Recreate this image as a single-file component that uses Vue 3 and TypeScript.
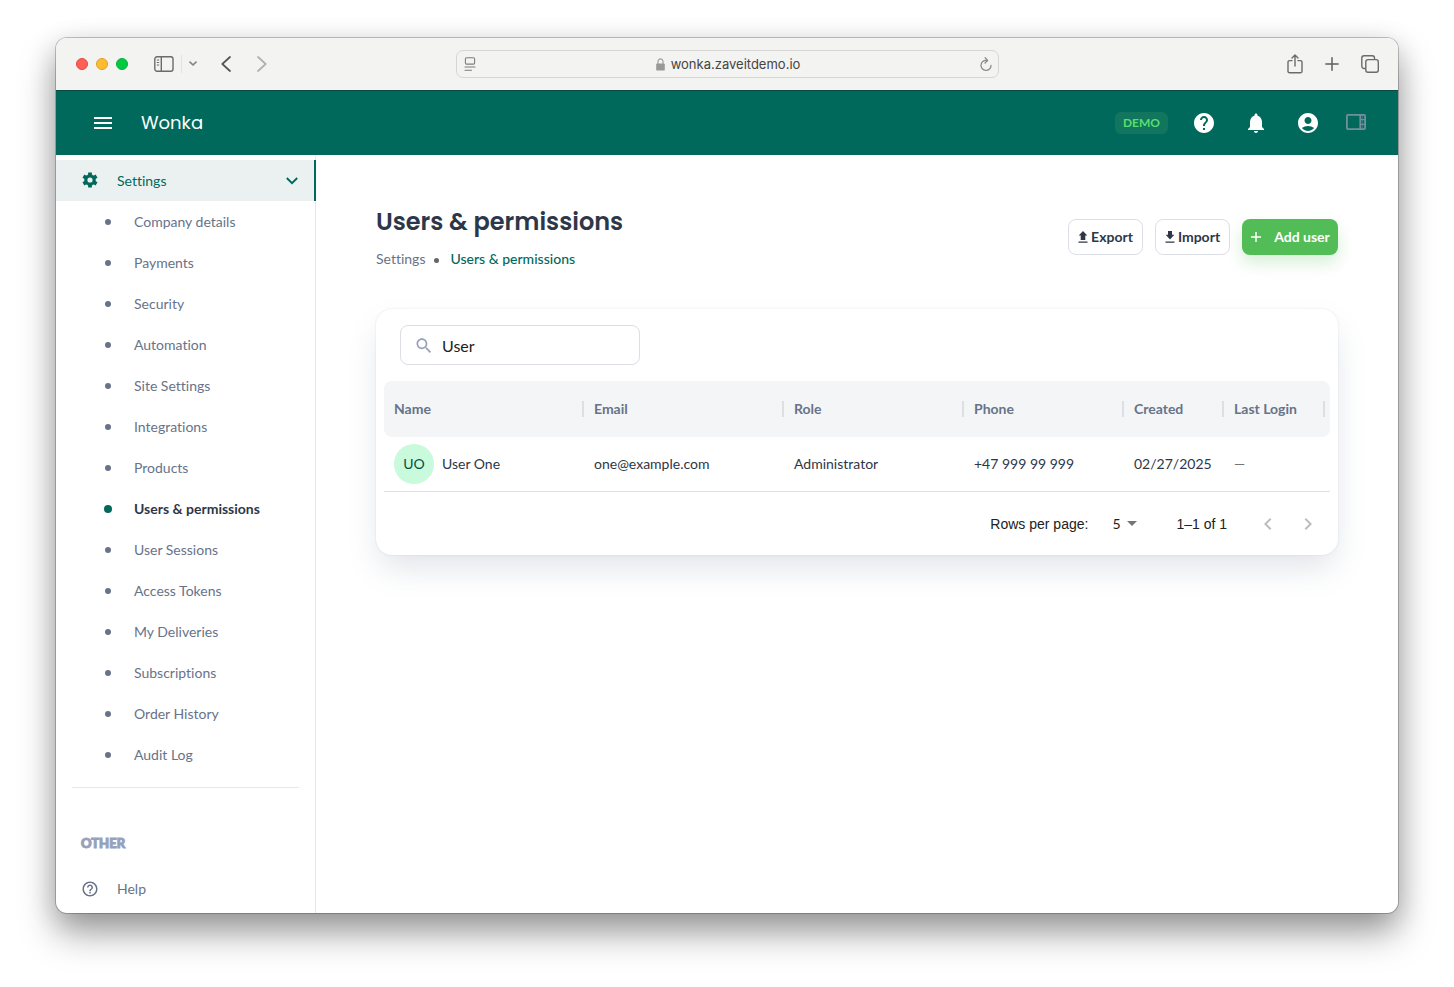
<script setup lang="ts">
import { ref } from 'vue'

interface Column {
  key: string
  label: string
}

interface UserRow {
  initials: string
  name: string
  email: string
  role: string
  phone: string
  created: string
  lastLogin: string
}

const navItems: string[] = [
  'Company details',
  'Payments',
  'Security',
  'Automation',
  'Site Settings',
  'Integrations',
  'Products',
  'Users & permissions',
  'User Sessions',
  'Access Tokens',
  'My Deliveries',
  'Subscriptions',
  'Order History',
  'Audit Log',
]
const activeItem = ref('Users & permissions')

const columns: Column[] = [
  { key: 'name', label: 'Name' },
  { key: 'email', label: 'Email' },
  { key: 'role', label: 'Role' },
  { key: 'phone', label: 'Phone' },
  { key: 'created', label: 'Created' },
  { key: 'last', label: 'Last Login' },
]

const users: UserRow[] = [
  {
    initials: 'UO',
    name: 'User One',
    email: 'one@example.com',
    role: 'Administrator',
    phone: '+47 999 99 999',
    created: '02/27/2025',
    lastLogin: '—',
  },
]

const query = ref('User')
const rowsPerPage = ref('5')
</script>

<template>
  <div class="desktop">
    <div class="window">
      <div class="toolbar">
        <div class="toolbar-left">
          <div class="lights">
            <span class="light red"></span>
            <span class="light yellow"></span>
            <span class="light green"></span>
          </div>
          <button class="tool sidebar-toggle" type="button" aria-label="Toggle sidebar">
            <svg width="20" height="16" viewBox="0 0 20 16" fill="none" stroke="#6b6b6a" stroke-width="1.4">
              <rect x="0.8" y="0.8" width="18.2" height="14.4" rx="2.2" />
              <path d="M7.3 1v14" />
              <path d="M2.8 4h2.4M2.8 6.5h2.4M2.8 9h2.4" stroke-width="1" />
            </svg>
          </button>
          <span class="tool-divider"></span>
          <button class="tool tab-groups" type="button" aria-label="Tab groups">
            <svg width="8" height="6" viewBox="0 0 8 6" fill="none" stroke="#858584" stroke-width="1.7" stroke-linecap="round" stroke-linejoin="round">
              <path d="M1 1.2l3 2.8 3-2.8" />
            </svg>
          </button>
          <button class="tool back" type="button" aria-label="Back">
            <svg width="10" height="16" viewBox="0 0 10 16" fill="none" stroke="#555554" stroke-width="1.7" stroke-linecap="round" stroke-linejoin="round">
              <path d="M9 1L1.3 8 9 15" />
            </svg>
          </button>
          <button class="tool forward" type="button" aria-label="Forward">
            <svg width="10" height="16" viewBox="0 0 10 16" fill="none" stroke="#b0b0af" stroke-width="1.7" stroke-linecap="round" stroke-linejoin="round">
              <path d="M1 1l7.7 7L1 15" />
            </svg>
          </button>
        </div>
        <div class="address">
          <svg width="12" height="14" viewBox="0 0 12 14" fill="none" stroke="#7d7d7c" stroke-width="1.1" stroke-linecap="round">
            <rect x="1.4" y="0.7" width="9.2" height="6.4" rx="1.2" />
            <path d="M1 10h10M1 13.2h6.5" />
          </svg>
          <span class="host">
            <svg width="9" height="13" viewBox="0 0 9 13">
              <path d="M2 6V3.4a2.5 2.6 0 0 1 5 0V6" fill="none" stroke="#a2a2a1" stroke-width="1.2" />
              <rect x="0.2" y="5.4" width="8.6" height="7.2" rx="1.2" fill="#999998" />
            </svg>
            wonka.zaveitdemo.io
          </span>
          <button class="tool" type="button" aria-label="Reload">
            <svg width="12" height="15" viewBox="0 0 12 15" fill="none" stroke="#8b8b8a" stroke-width="1.3" stroke-linecap="round" stroke-linejoin="round">
              <path d="M6.500 3.400A5 5 0 1 0 11 8.400" />
              <path d="M5.200 0.800L7.600 3.500 5 6" />
            </svg>
          </button>
        </div>
        <div class="toolbar-right">
          <button class="tool" type="button" aria-label="Share">
            <svg width="16" height="20" viewBox="0 0 16 20" fill="none" stroke="#6b6b6a" stroke-width="1.4" stroke-linecap="round" stroke-linejoin="round">
              <path d="M5 6.600H2.600A1.600 1.600 0 0 0 1 8.200v9A1.600 1.600 0 0 0 2.600 18.800h10.800a1.600 1.600 0 0 0 1.600-1.600v-9a1.600 1.600 0 0 0-1.600-1.600H11" />
              <path d="M8 12V1.200M5 4l3-3 3 3" />
            </svg>
          </button>
          <button class="tool" type="button" aria-label="New tab">
            <svg width="14" height="14" viewBox="0 0 14 14" fill="none" stroke="#5f5f5e" stroke-width="1.500" stroke-linecap="round">
              <path d="M7 0.800v12.400M0.800 7h12.400" />
            </svg>
          </button>
          <button class="tool" type="button" aria-label="Tab overview">
            <svg width="18" height="18" viewBox="0 0 18 18" fill="none" stroke="#6b6b6a" stroke-width="1.400">
              <path d="M4.800 13.500H3A2.200 2.200 0 0 1 0.800 11.300V3A2.200 2.200 0 0 1 3 0.800h8.300A2.200 2.200 0 0 1 13.500 3v1.500" />
              <rect x="4.800" y="4.600" width="12.500" height="12.600" rx="2.200" />
            </svg>
          </button>
        </div>
      </div>

      <header class="app-bar">
        <button class="bar-btn menu" type="button" aria-label="Menu">
          <svg width="24" height="24" viewBox="0 0 24 24" fill="currentColor">
            <path d="M3 18h18v-2H3v2zm0-5h18v-2H3v2zm0-7v2h18V6H3z" />
          </svg>
        </button>
        <span class="brand">Wonka</span>
        <div class="bar-actions">
          <span class="demo">DEMO</span>
          <button class="bar-btn" type="button" aria-label="Help">
            <svg width="24" height="24" viewBox="0 0 24 24" fill="currentColor">
              <path d="M12 2C6.480 2 2 6.480 2 12s4.480 10 10 10 10-4.480 10-10S17.520 2 12 2zm1 17h-2v-2h2v2zm2.070-7.750l-.9.920C13.450 12.900 13 13.500 13 15h-2v-.5c0-1.100.450-2.100 1.170-2.830l1.240-1.260c.370-.360.590-.860.590-1.410 0-1.100-.9-2-2-2s-2 .9-2 2H8c0-2.210 1.790-4 4-4s4 1.790 4 4c0 .880-.360 1.680-.930 2.250z" />
            </svg>
          </button>
          <button class="bar-btn" type="button" aria-label="Notifications">
            <svg width="24" height="24" viewBox="0 0 24 24" fill="currentColor">
              <path d="M12 22c1.100 0 2-.9 2-2h-4c0 1.100.890 2 2 2zm6-6v-5c0-3.070-1.640-5.640-4.500-6.320V4c0-.830-.670-1.500-1.500-1.500s-1.500.670-1.500 1.500v.680C7.630 5.360 6 7.920 6 11v5l-2 2v1h16v-1l-2-2z" />
            </svg>
          </button>
          <button class="bar-btn" type="button" aria-label="Account">
            <svg width="24" height="24" viewBox="0 0 24 24" fill="currentColor">
              <path d="M12 2C6.480 2 2 6.480 2 12s4.480 10 10 10 10-4.480 10-10S17.520 2 12 2zm0 4c1.930 0 3.500 1.570 3.500 3.500S13.930 13 12 13s-3.500-1.570-3.500-3.500S10.070 6 12 6zm0 14c-2.030 0-4.430-.820-6.140-2.880C7.550 15.800 9.680 15 12 15s4.450.8 6.140 2.120C16.430 19.180 14.030 20 12 20z" />
            </svg>
          </button>
          <button class="bar-btn panel" type="button" aria-label="Side panel">
            <svg width="20" height="18" viewBox="0 0 20 18" fill="none" stroke="#71909f" stroke-width="1.800">
              <rect x="0.900" y="0.900" width="18.200" height="14.200" rx="1" />
              <path d="M14.300 1v14" />
              <path d="M16.600 1v14" stroke-width="1" stroke-opacity="0.5" />
              <path d="M14 5.600h5M14 10.400h5" stroke-width="1.400" />
            </svg>
          </button>
        </div>
      </header>

      <div class="body">
        <nav class="sidebar" aria-label="Settings">
          <button class="group" type="button" aria-expanded="true">
            <svg class="group-icon" width="18" height="20" viewBox="0 0 18 20" fill="none" stroke="currentColor">
              <circle cx="9" cy="9" r="4.200" stroke-width="3.200" />
              <path d="M9 1.400v3M9 13.600v3M2.420 5.200l2.600 1.500M12.980 11.300l2.600 1.500M2.420 12.800l2.600-1.500M12.980 6.700l2.600-1.500" stroke-width="3.800" stroke-linejoin="round" />
            </svg>
            <span class="group-label">Settings</span>
            <svg width="12" height="8" viewBox="0 0 12 8" fill="none" stroke="currentColor" stroke-width="1.900">
              <path d="M0.800 1L6 6.200 11.200 1" />
            </svg>
          </button>
          <ul class="nav-list">
            <li v-for="item in navItems" :key="item">
              <a
                class="nav-link"
                :class="{ active: item === activeItem }"
                href="#"
                :aria-current="item === activeItem ? 'page' : undefined"
                @click.prevent="activeItem = item"
              >
                <span class="bullet"></span>{{ item }}
              </a>
            </li>
          </ul>
          <hr class="nav-divider" />
          <h2 class="section">OTHER</h2>
          <a class="help" href="#">
            <svg width="18" height="18" viewBox="0 0 24 24" fill="currentColor">
              <path d="M11 18h2v-2h-2v2zm1-16C6.480 2 2 6.480 2 12s4.480 10 10 10 10-4.480 10-10S17.520 2 12 2zm0 18c-4.410 0-8-3.590-8-8s3.590-8 8-8 8 3.590 8 8-3.590 8-8 8zm0-14c-2.210 0-4 1.790-4 4h2c0-1.100.9-2 2-2s2 .9 2 2c0 2-3 1.750-3 5h2c0-2.250 3-2.500 3-5 0-2.210-1.790-4-4-4z" />
            </svg>
            Help
          </a>
        </nav>

        <main class="content">
          <div class="page-head">
            <div>
              <h1 class="title">Users &amp; permissions</h1>
              <nav class="crumbs" aria-label="Breadcrumb">
                <a class="crumb" href="#">Settings</a>
                <span class="crumb-dot"></span>
                <a class="crumb current" href="#" aria-current="page">Users &amp; permissions</a>
              </nav>
            </div>
            <div class="actions">
              <button class="btn outline" type="button">
                <svg width="10" height="12" viewBox="0 0 10 12" fill="currentColor">
                  <path d="M5 0L9.300 4.500H7.300V9H2.700V4.500H0.700zM0.500 10.400h9v1.300h-9z" />
                </svg>
                Export
              </button>
              <button class="btn outline" type="button">
                <svg width="10" height="12" viewBox="0 0 10 12" fill="currentColor">
                  <path d="M3 0h4v3.800h2.300L5 8.600 0.700 3.800H3zM0.500 10.400h9v1.300h-9z" />
                </svg>
                Import
              </button>
              <button class="btn primary" type="button">
                <svg width="12" height="12" viewBox="0 0 12 12" fill="none" stroke="currentColor" stroke-width="1.500">
                  <path d="M6 1v10M1 6h10" />
                </svg>
                Add user
              </button>
            </div>
          </div>

          <section class="card">
            <label class="search">
              <svg width="20" height="20" viewBox="0 0 24 24" fill="currentColor">
                <path transform="translate(0 1)" d="M15.500 14h-.790l-.280-.270C15.410 12.590 16 11.110 16 9.500 16 5.910 13.090 3 9.500 3S3 5.910 3 9.500 5.910 16 9.500 16c1.610 0 3.090-.590 4.230-1.570l.270.280v.790l5 4.990L20.490 19l-4.990-5zm-6 0C7.010 14 5 11.990 5 9.500S7.010 5 9.500 5 14 7.010 14 9.500 11.990 14 9.500 14z" />
              </svg>
              <input v-model="query" class="search-input" type="text" aria-label="Search users" />
            </label>

            <table class="table">
              <colgroup>
                <col v-for="c in columns" :key="c.key" :class="'col-' + c.key" />
              </colgroup>
              <thead>
                <tr>
                  <th v-for="c in columns" :key="c.key" scope="col">
                    <div class="th-inner">{{ c.label }}</div>
                  </th>
                </tr>
              </thead>
              <tbody>
                <tr v-for="u in users" :key="u.email">
                  <td>
                    <div class="person">
                      <span class="avatar">{{ u.initials }}</span>{{ u.name }}
                    </div>
                  </td>
                  <td>{{ u.email }}</td>
                  <td>{{ u.role }}</td>
                  <td>{{ u.phone }}</td>
                  <td>{{ u.created }}</td>
                  <td class="muted">{{ u.lastLogin }}</td>
                </tr>
              </tbody>
            </table>

            <div class="pager">
              <label for="rows">Rows per page:</label>
              <span class="select-wrap">
                <select id="rows" v-model="rowsPerPage" class="rows">
                  <option>5</option>
                  <option>10</option>
                  <option>25</option>
                </select>
                <svg width="10" height="5" viewBox="0 0 10 5" fill="#757575">
                  <path d="M0 0h10L5 5z" />
                </svg>
              </span>
              <span class="range">1–1 of 1</span>
              <button class="page-btn" type="button" aria-label="Previous page" disabled>
                <svg width="24" height="24" viewBox="0 0 24 24" fill="currentColor">
                  <path d="M15.410 7.410L14 6l-6 6 6 6 1.410-1.410L10.830 12z" />
                </svg>
              </button>
              <button class="page-btn" type="button" aria-label="Next page" disabled>
                <svg width="24" height="24" viewBox="0 0 24 24" fill="currentColor">
                  <path d="M10 6L8.590 7.410 13.170 12l-4.580 4.590L10 18l6-6z" />
                </svg>
              </button>
            </div>
          </section>
        </main>
      </div>
    </div>
  </div>
</template>

<style>
body {
  margin: 0;
  background: #fff;
}
</style>

<style scoped>
* {
  box-sizing: border-box;
}
.desktop {
  min-height: 100vh;
  display: flex;
  padding: 38px 56px 74px;
  font-family: Lato, "Liberation Sans", sans-serif;
  font-size: 14px;
  font-variant-ligatures: none;
  color: #2d3748;
}
svg {
  display: block;
  flex: none;
}
button {
  font: inherit;
  color: inherit;
  background: none;
  border: 0;
  padding: 0;
  cursor: pointer;
}
a {
  color: inherit;
  text-decoration: none;
}
.window {
  flex: 1;
  min-width: 0;
  display: flex;
  flex-direction: column;
  background: #fff;
  border-radius: 11px;
  overflow: hidden;
  box-shadow: 0 0 0 1px rgba(0, 0, 0, 0.22), 0 20px 36px rgba(0, 0, 0, 0.36), 0 6px 28px rgba(0, 0, 0, 0.14);
}

/* browser toolbar */
.toolbar {
  display: grid;
  grid-template-columns: 1fr minmax(200px, 543px) 1fr;
  align-items: center;
  height: 53px;
  background: #f3f3f1;
  border-bottom: 1px solid #064a40;
}
.toolbar-left {
  display: flex;
  align-items: center;
  padding-left: 20px;
}
.lights {
  display: flex;
  gap: 8px;
}
.light {
  width: 12px;
  height: 12px;
  border-radius: 50%;
}
.red {
  background: #fe5f57;
  border: 1px solid #e24b43;
}
.yellow {
  background: #febc2e;
  border: 1px solid #dfa02a;
}
.green {
  background: #01c940;
  border: 1px solid #02b13a;
}
.tool {
  display: flex;
}
.sidebar-toggle {
  margin-left: 26px;
}
.tool-divider {
  width: 1px;
  height: 18px;
  margin: 0 7px;
  background: #e2e2e0;
}
.back {
  margin-left: 24px;
}
.forward {
  margin-left: 26px;
}
.address {
  display: flex;
  align-items: center;
  justify-content: space-between;
  height: 28px;
  padding: 0 5px 0 7px;
  border: 1px solid #d5d5d3;
  border-radius: 7px;
}
.host {
  display: flex;
  align-items: center;
  gap: 6px;
  font-family: Inter, Roboto, sans-serif;
  font-size: 13px;
  color: #444443;
}
.toolbar-right {
  display: flex;
  align-items: center;
  justify-content: flex-end;
  gap: 22px;
  padding-right: 19px;
}

/* application bar */
.app-bar {
  display: flex;
  align-items: center;
  height: 64px;
  padding: 0 32px 0 35px;
  background: #00695c;
  color: #fff;
}
.bar-btn {
  display: flex;
}
.brand {
  margin-left: 26px;
  font-family: Poppins, Inter, sans-serif;
  font-size: 18px;
  line-height: 26px;
}
.bar-actions {
  display: flex;
  align-items: center;
  gap: 28px;
  margin-left: auto;
}
.demo {
  height: 22px;
  padding: 0 8px;
  margin-right: -4px;
  border-radius: 6px;
  background: #12765e;
  color: #58de70;
  font-size: 12px;
  font-weight: 700;
  line-height: 22px;
}
.panel {
  margin-left: -2px;
}

/* layout */
.body {
  flex: 1;
  display: flex;
  min-height: 0;
}
.sidebar {
  flex: none;
  width: 260px;
  padding-top: 5px;
  border-right: 1px solid #e6e8eb;
  color: #677389;
}
.group {
  display: flex;
  align-items: center;
  width: 260px;
  height: 41px;
  padding: 0 16px 0 25px;
  background: #ebf1f1;
  border-right: 2px solid #00695c;
  color: #00695c;
}
.group-label {
  flex: 1;
  margin-left: 18px;
  text-align: left;
}
.nav-list {
  margin: 0;
  padding: 0;
  list-style: none;
}
.nav-link {
  display: flex;
  align-items: center;
  height: 41px;
  padding-left: 49px;
}
.bullet {
  width: 6px;
  height: 6px;
  margin-right: 23px;
  border-radius: 50%;
  background: #677389;
}
.active {
  padding-left: 48px;
  color: #2d3748;
  font-weight: 700;
}
.active .bullet {
  width: 8px;
  height: 8px;
  margin-right: 22px;
  background: #00695c;
}
.nav-divider {
  height: 1px;
  margin: 12px 16px 0;
  border: 0;
  background: #e6e8eb;
}
.section {
  margin: 46px 0 0;
  padding-left: 25px;
  font-family: "Lato Black", Lato, sans-serif;
  font-size: 13px;
  font-weight: 900;
  line-height: 18px;
  color: #97a1ba;
  -webkit-text-stroke: 1px #97a1ba;
}
.help {
  display: flex;
  align-items: center;
  gap: 18px;
  height: 41px;
  margin-top: 16px;
  padding-left: 25px;
}

/* page */
.content {
  flex: 1;
  min-width: 0;
  padding: 48px 60px;
}
.page-head {
  display: flex;
  align-items: flex-start;
  justify-content: space-between;
}
.title {
  margin: 0;
  font-family: Poppins, Inter, sans-serif;
  font-size: 24px;
  font-weight: 600;
  line-height: 38px;
}
.crumbs {
  display: flex;
  align-items: center;
  margin-top: 8px;
  line-height: 20px;
  color: #677389;
}
.crumb-dot {
  width: 5px;
  height: 5px;
  margin: 2px 11px 0 9px;
  border-radius: 50%;
  background: #666;
}
.current {
  color: #00695c;
  font-weight: 500;
}
.actions {
  display: flex;
  gap: 12px;
  margin-top: 16px;
}
.btn {
  display: flex;
  align-items: center;
  justify-content: center;
  height: 36px;
  border-radius: 8px;
  font-weight: 700;
  line-height: 16px;
  white-space: nowrap;
}
.outline {
  width: 75px;
  gap: 3px;
  border: 1px solid #dcdee6;
}
.primary {
  width: 96px;
  gap: 12px;
  background: #52bd57;
  color: #fff;
  box-shadow: 0 8px 16px rgba(82, 189, 87, 0.24);
}

/* card */
.card {
  margin-top: 40px;
  padding: 16px 8px 0;
  border-radius: 16px;
  background: #fff;
  box-shadow: 0 0 2px rgba(100, 116, 139, 0.2), 0 16px 32px -4px rgba(100, 116, 139, 0.2);
}
.search {
  display: flex;
  align-items: center;
  width: 240px;
  height: 40px;
  margin-left: 16px;
  padding: 0 13px;
  gap: 8px;
  border: 1px solid #dcdee3;
  border-radius: 8px;
  color: #97a1ba;
}
.search-input {
  flex: 1;
  min-width: 0;
  padding: 0;
  border: 0;
  outline: 0;
  background: none;
  font: inherit;
  font-size: 16px;
  color: #212121;
}
.table {
  width: 100%;
  margin-top: 16px;
  border-collapse: separate;
  border-spacing: 0;
  table-layout: fixed;
}
.col-name,
.col-email {
  width: 200px;
}
.col-role {
  width: 180px;
}
.col-phone {
  width: 160px;
}
.col-created {
  width: 100px;
}
th {
  height: 56px;
  padding: 0 5px 0 10px;
  background: #f4f5f7;
  color: #677389;
  font-weight: 700;
  text-align: left;
}
th:first-child {
  border-radius: 8px 0 0 8px;
}
th:last-child {
  border-radius: 0 8px 8px 0;
}
.th-inner {
  line-height: 16px;
  margin-right: -5px;
  border-right: 2px solid #dddfe2;
}
th:last-child .th-inner {
  margin-right: 0;
}
td {
  height: 55px;
  padding: 0 0 0 10px;
  border-bottom: 1px solid #e0e0e0;
  line-height: 16px;
  white-space: nowrap;
}
.person {
  display: flex;
  align-items: center;
  gap: 8px;
}
.avatar {
  width: 40px;
  height: 40px;
  border-radius: 50%;
  background: #c8fadb;
  color: #005249;
  line-height: 40px;
  text-align: center;
}
.muted {
  color: #757575;
}
.pager {
  display: flex;
  align-items: center;
  justify-content: flex-end;
  height: 63px;
  padding-right: 10px;
  font-family: "Liberation Sans", Arial, sans-serif;
  color: #212121;
}
.select-wrap {
  display: flex;
  align-items: center;
  margin-left: 24px;
}
.rows {
  width: 25px;
  margin-right: -10px;
  padding: 0;
  border: 0;
  background: transparent;
  appearance: none;
  font-family: Lato, sans-serif;
  font-size: 14px;
  color: #212121;
}
.range {
  margin: 0 29px 0 39px;
}
.page-btn {
  display: flex;
  color: #bdbdbd;
}
.page-btn + .page-btn {
  margin-left: 16px;
}
</style>
